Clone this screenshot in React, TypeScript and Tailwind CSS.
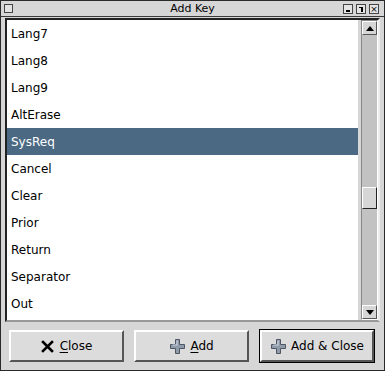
const keys = ["Lang7", "Lang8", "Lang9", "AltErase", "SysReq", "Cancel", "Clear", "Prior", "Return", "Separator", "Out"];

const PlusIcon = () => (
  <svg width="17" height="17" viewBox="0 0 17 17">
    <path
      d="M6.5 1.5h4v5h5v4h-5v5h-4v-5h-5v-4h5z"
      fill="#8f9aab"
      stroke="#4e5663"
      strokeWidth="1"
      strokeLinejoin="round"
    />
    <path d="M7.5 2.5h1v5h-5v-1h4z" fill="#d2d8e2" />
  </svg>
);

const CloseIcon = () => (
  <svg width="13" height="13" viewBox="0 0 13 13">
    <path d="M2 2l9 9M11 2l-9 9" stroke="#000" strokeWidth="2.6" strokeLinecap="square" />
  </svg>
);

const Arrow = ({ up }: { up?: boolean }) => (
  <div className="flex h-[14px] w-[15px] items-center justify-center border border-t-white border-l-white border-b-[#555] border-r-[#555] bg-[#d6d6d6]">
    <svg width="8" height="5" viewBox="0 0 8 5">
      {up ? <path d="M0 5h8L4 0z" fill="#000" /> : <path d="M0 0h8L4 5z" fill="#000" />}
    </svg>
  </div>
);

export default function App() {
  return (
    <div
      className="flex h-[371px] w-[385px] flex-col border border-[#2a2a2a] bg-[#d6d6d6] text-black"
      style={{ fontFamily: '"DejaVu Sans", sans-serif' }}
    >
      {/* title bar */}
      <div className="relative flex h-[16px] items-center justify-center border-b border-[#3a3a3a] text-[11px]">
        <div className="absolute left-[3px] top-[3px] h-[9px] w-[9px] border border-[#444] bg-[#e2e2e2]" />
        <span className="leading-none">Add Key</span>
        <div className="absolute right-[5px] top-[3px] flex gap-[3px]">
          <div className="flex h-[10px] w-[10px] items-end justify-center border border-[#444] bg-[#e4e4e4] pb-[1px]">
            <div className="h-[2px] w-[4px] bg-black" />
          </div>
          <div className="relative h-[10px] w-[10px] border border-[#444] bg-[#e4e4e4]">
            <div className="absolute right-[2px] top-[2px] h-[5px] w-[4px] border-r-2 border-t border-black" />
          </div>
          <div className="flex h-[10px] w-[10px] items-center justify-center border border-[#444] bg-[#e4e4e4] text-[9px] leading-none">
            ×
          </div>
        </div>
      </div>

      {/* list + scrollbar */}
      <div className="px-[4px] pt-[1px]">
        <div className="flex h-[304px] border-2 border-t-[#222] border-l-[#222] border-b-[#999] border-r-[#ececec]">
          <div className="w-[352px] bg-white">
            {keys.map((k) => (
              <div
                key={k}
                className={`flex h-[27px] items-center pl-[4px] text-[12px] ${
                  k === "SysReq" ? "bg-[#4b6983] text-white" : ""
                }`}
              >
                {k}
              </div>
            ))}
          </div>
          <div className="ml-[3px] flex w-[17px] flex-col border border-t-[#888] border-l-[#888] border-b-white border-r-white bg-[#c2c2c2]">
            <Arrow up />
            <div className="mt-[152px] h-[22px] w-[15px] border border-t-white border-l-white border-b-[#222] border-r-[#222] bg-[#d6d6d6]" />
            <div className="flex-1" />
            <Arrow />
          </div>
        </div>
      </div>

      {/* buttons */}
      <div className="flex gap-[10px] pl-[8px] pt-[8px] text-[12px]">
        <button className="flex h-[32px] w-[115px] items-center justify-center gap-[6px] border-2 border-t-white border-l-white border-b-[#555] border-r-[#555] bg-[#dcdcdc]">
          <CloseIcon />
          <span>
            <span className="underline underline-offset-2">C</span>lose
          </span>
        </button>
        <button className="flex h-[32px] w-[115px] items-center justify-center gap-[4px] border-2 border-t-white border-l-white border-b-[#555] border-r-[#555] bg-[#dcdcdc]">
          <PlusIcon />
          <span>
            <span className="underline underline-offset-2">A</span>dd
          </span>
        </button>
        <div className="-mt-[1px] border border-black">
          <button className="flex h-[32px] w-[114px] items-center justify-center gap-[4px] border-2 border-t-white border-l-white border-b-[#555] border-r-[#555] bg-[#dcdcdc]">
            <PlusIcon />
            <span>Add &amp; Close</span>
          </button>
        </div>
      </div>
    </div>
  );
}
